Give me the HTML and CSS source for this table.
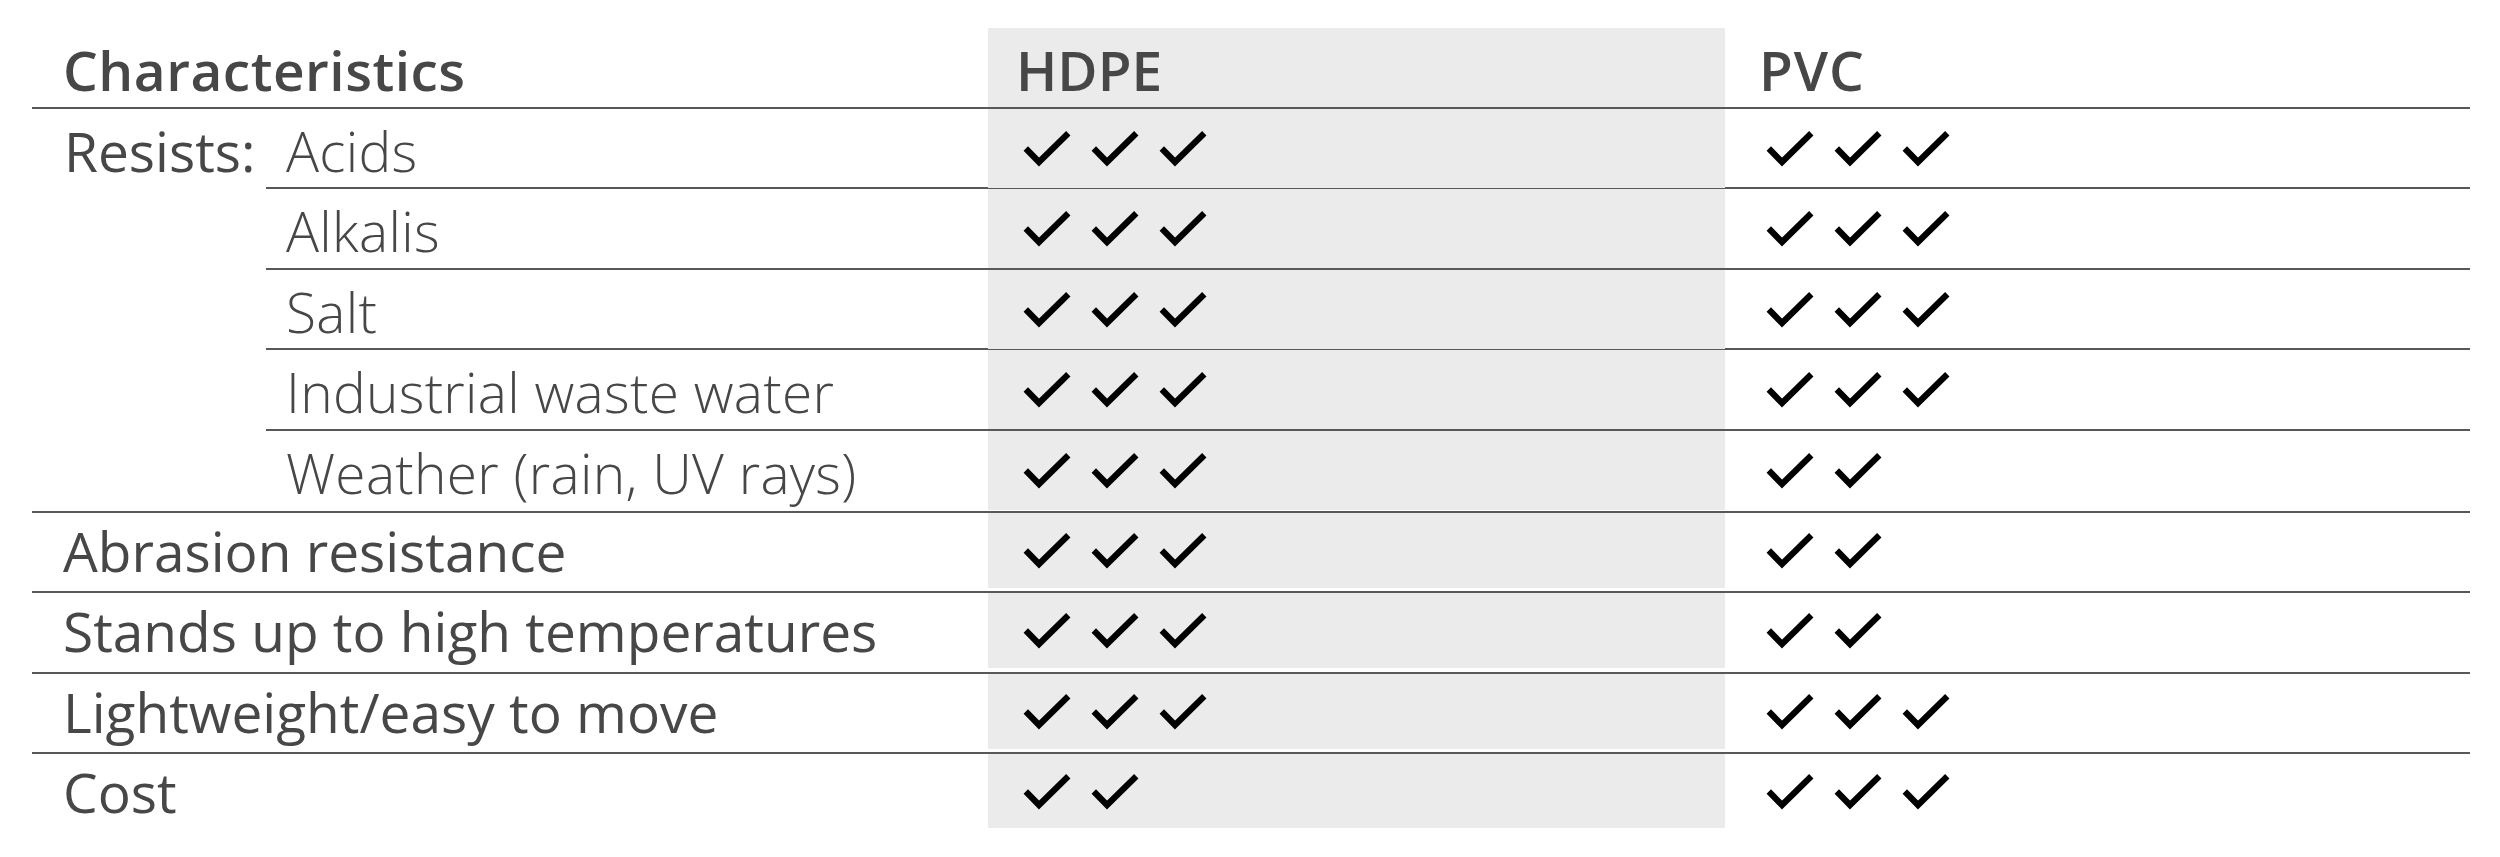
FILE: index.html
```html
<!DOCTYPE html>
<html lang="en">
<head>
<meta charset="utf-8">
<title>HDPE vs PVC</title>
<link rel="stylesheet" href="styles.css">
</head>
<body>
<svg width="0" height="0" class="defs">
  <defs>
    <symbol id="chk" viewBox="0 0 48 37">
      <polyline points="2.8,18.5 16,32 45.3,3.3" fill="none" stroke="#000" stroke-width="6.2" stroke-linejoin="miter" stroke-linecap="butt"/>
    </symbol>
  </defs>
</svg>
<div class="table">
  <div class="row head">
    <div class="cell label">Characteristics</div>
    <div class="cell hdpe">HDPE</div>
    <div class="cell pvc">PVC</div>
  </div>

  <div class="group">
    <div class="group-label">Resists:</div>
    <div class="subrows">
      <div class="row sub">
        <div class="cell sublabel">Acids</div>
        <div class="cell hdpe"><span class="checks"><svg class="ck"><use href="#chk"/></svg><svg class="ck"><use href="#chk"/></svg><svg class="ck"><use href="#chk"/></svg></span></div>
        <div class="cell pvc"><span class="checks"><svg class="ck"><use href="#chk"/></svg><svg class="ck"><use href="#chk"/></svg><svg class="ck"><use href="#chk"/></svg></span></div>
      </div>
      <div class="row sub">
        <div class="cell sublabel">Alkalis</div>
        <div class="cell hdpe"><span class="checks"><svg class="ck"><use href="#chk"/></svg><svg class="ck"><use href="#chk"/></svg><svg class="ck"><use href="#chk"/></svg></span></div>
        <div class="cell pvc"><span class="checks"><svg class="ck"><use href="#chk"/></svg><svg class="ck"><use href="#chk"/></svg><svg class="ck"><use href="#chk"/></svg></span></div>
      </div>
      <div class="row sub">
        <div class="cell sublabel">Salt</div>
        <div class="cell hdpe"><span class="checks"><svg class="ck"><use href="#chk"/></svg><svg class="ck"><use href="#chk"/></svg><svg class="ck"><use href="#chk"/></svg></span></div>
        <div class="cell pvc"><span class="checks"><svg class="ck"><use href="#chk"/></svg><svg class="ck"><use href="#chk"/></svg><svg class="ck"><use href="#chk"/></svg></span></div>
      </div>
      <div class="row sub fourth">
        <div class="cell sublabel">Industrial waste water</div>
        <div class="cell hdpe"><span class="checks"><svg class="ck"><use href="#chk"/></svg><svg class="ck"><use href="#chk"/></svg><svg class="ck"><use href="#chk"/></svg></span></div>
        <div class="cell pvc"><span class="checks"><svg class="ck"><use href="#chk"/></svg><svg class="ck"><use href="#chk"/></svg><svg class="ck"><use href="#chk"/></svg></span></div>
      </div>
      <div class="row sub last">
        <div class="cell sublabel">Weather (rain, UV rays)</div>
        <div class="cell hdpe"><span class="checks"><svg class="ck"><use href="#chk"/></svg><svg class="ck"><use href="#chk"/></svg><svg class="ck"><use href="#chk"/></svg></span></div>
        <div class="cell pvc"><span class="checks"><svg class="ck"><use href="#chk"/></svg><svg class="ck"><use href="#chk"/></svg></span></div>
      </div>
    </div>
  </div>

  <div class="row main">
    <div class="cell label">Abrasion resistance</div>
    <div class="cell hdpe"><span class="checks"><svg class="ck"><use href="#chk"/></svg><svg class="ck"><use href="#chk"/></svg><svg class="ck"><use href="#chk"/></svg></span></div>
    <div class="cell pvc"><span class="checks"><svg class="ck"><use href="#chk"/></svg><svg class="ck"><use href="#chk"/></svg></span></div>
  </div>
  <div class="row main">
    <div class="cell label">Stands up to high temperatures</div>
    <div class="cell hdpe"><span class="checks"><svg class="ck"><use href="#chk"/></svg><svg class="ck"><use href="#chk"/></svg><svg class="ck"><use href="#chk"/></svg></span></div>
    <div class="cell pvc"><span class="checks"><svg class="ck"><use href="#chk"/></svg><svg class="ck"><use href="#chk"/></svg></span></div>
  </div>
  <div class="row main">
    <div class="cell label">Lightweight/easy to move</div>
    <div class="cell hdpe"><span class="checks"><svg class="ck"><use href="#chk"/></svg><svg class="ck"><use href="#chk"/></svg><svg class="ck"><use href="#chk"/></svg></span></div>
    <div class="cell pvc"><span class="checks"><svg class="ck"><use href="#chk"/></svg><svg class="ck"><use href="#chk"/></svg><svg class="ck"><use href="#chk"/></svg></span></div>
  </div>
  <div class="row main final">
    <div class="cell label">Cost</div>
    <div class="cell hdpe"><span class="checks"><svg class="ck"><use href="#chk"/></svg><svg class="ck"><use href="#chk"/></svg></span></div>
    <div class="cell pvc"><span class="checks"><svg class="ck"><use href="#chk"/></svg><svg class="ck"><use href="#chk"/></svg><svg class="ck"><use href="#chk"/></svg></span></div>
  </div>
</div>
</body>
</html>
```

FILE: styles.css
```css
html, body {
  margin: 0;
  padding: 0;
  background: #ffffff;
}

body {
  font-family: "Open Sans", "Liberation Sans", sans-serif;
  color: #474747;
  font-size: 55px;
}

.defs {
  position: absolute;
  width: 0;
  height: 0;
  overflow: hidden;
}

.table {
  width: 2438px;
  margin: 28px 0 0 32px;
}

.row {
  display: grid;
  grid-template-columns: 956px 737px 745px;
  height: 78.4px;
  box-sizing: content-box;
  border-bottom: 2px solid #585858;
}

.row.head {
  height: 79px;
  font-weight: 600;
}

.row.head .cell {
  padding-top: 4px;
}

.row.head .cell.label {
  letter-spacing: 0.5px;
}

.row.head .cell.hdpe {
  padding-left: 28px;
}

.row.head .cell.pvc {
  padding-left: 34px;
  letter-spacing: 1px;
}

.cell {
  display: flex;
  align-items: center;
  white-space: nowrap;
}

.cell.label {
  padding-left: 31px;
  font-weight: 500;
}

.row.head .cell.label {
  font-weight: 600;
}

.cell.hdpe {
  background: #ebebeb;
  padding-left: 26px;
}

.cell.pvc {
  padding-left: 32px;
}

.group {
  display: grid;
  grid-template-columns: 234px 1fr;
  border-bottom: 2px solid #585858;
}

.group-label {
  height: 78.4px;
  display: flex;
  align-items: center;
  padding-left: 32px;
  padding-top: 4px;
  box-sizing: border-box;
  font-weight: 500;
}

.row.sub {
  grid-template-columns: 722px 737px 745px;
}

.row.sub.fourth {
  height: 74.4px;
  padding-bottom: 4px;
}

.row.sub.last {
  border-bottom: none;
  height: 74.4px;
  padding-bottom: 6px;
}

.cell.sublabel {
  font-weight: 300;
  letter-spacing: 0.3px;
  padding-left: 20px;
  padding-top: 4px;
}

.row.main {
  height: 70.4px;
  padding-bottom: 8px;
}

.row.final {
  border-bottom: none;
  height: 66px;
  padding-bottom: 8px;
}

.checks {
  display: flex;
  gap: 20px;
  margin-left: 9px;
}

.ck {
  width: 48px;
  height: 37px;
  display: block;
}
```
